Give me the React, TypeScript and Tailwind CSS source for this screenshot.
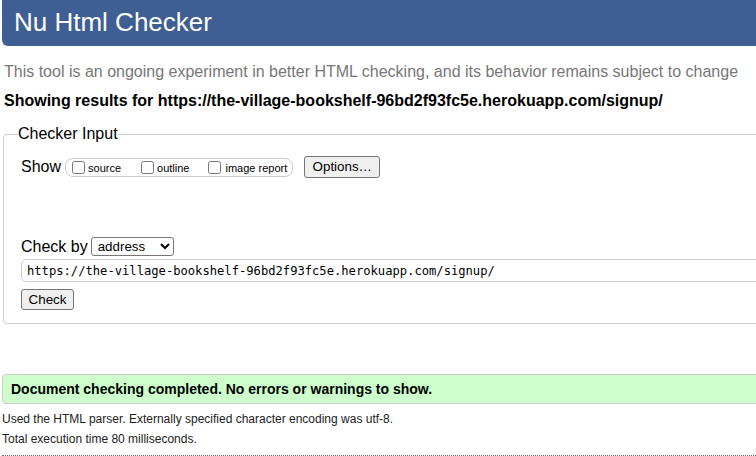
import React from "react";

const sans = { fontFamily: '"Liberation Sans", Arial, sans-serif' };

const url = "https://the-village-bookshelf-96bd2f93fc5e.herokuapp.com/signup/";

export default function App() {
  return (
    <div
      className="w-[756px] h-[456px] overflow-hidden bg-white text-black font-['Liberation_Sans',Arial,sans-serif]"
      style={sans}
    >
      <div className="w-[820px]">
        <header className="ml-[2px] h-[46px] bg-[#3e5e94] rounded-b-[6px] pl-[12px] flex items-center">
          <h1 className="text-[26px] leading-none text-white pb-[2px]">Nu Html Checker</h1>
        </header>

        <p className="mt-[16px] ml-[4px] text-[16px] leading-[20px] text-[#777] whitespace-nowrap">
          This tool is an ongoing experiment in better HTML checking, and its behavior remains subject to change
        </p>
        <p className="mt-[9px] ml-[4px] text-[16px] leading-[20px] font-bold whitespace-nowrap">
          Showing results for {url}
        </p>

        <fieldset className="mt-[13px] ml-[3px] border border-[#ccc] rounded-[4px] pl-[14px] pb-[13px]">
          <legend className="text-[16px] leading-[20px]">Checker Input</legend>
          <div className="pl-[3px]">
            <div className="mt-[12px] flex items-center h-[22px]">
              <span className="text-[16px] mr-[4px]">Show</span>
              <div className="flex items-center h-[19px] border border-[#ccc] rounded-[8px] pl-[6px] pr-[5px] text-[11px]">
                <label className="flex items-center">
                  <input type="checkbox" className="w-[13px] h-[13px] m-0 mr-[3px]" />
                  <span className="mt-[3px]">source</span>
                </label>
                <label className="flex items-center ml-[20px]">
                  <input type="checkbox" className="w-[13px] h-[13px] m-0 mr-[3px]" />
                  <span className="mt-[3px]">outline</span>
                </label>
                <label className="flex items-center ml-[19px]">
                  <input type="checkbox" className="w-[13px] h-[13px] m-0 mr-[4px]" />
                  <span className="mt-[3px]">image report</span>
                </label>
              </div>
              <button className="ml-[11px] w-[76px] h-[22px] bg-[#efefef] border border-[#767676] rounded-[3px] text-[13.33px]">
                Options…
              </button>
            </div>

            <div className="mt-[59px] flex items-center h-[19px]">
              <span className="text-[16px] leading-[19px] mr-[3px]">Check by</span>
              <select
                defaultValue="address"
                className="w-[83px] h-[19px] border border-[#767676] rounded-[3px] bg-white text-[13.33px] leading-[15px] pl-[2px] py-0"
              >
                <option value="address">address</option>
                <option value="upload">file upload</option>
                <option value="textarea">text input</option>
              </select>
            </div>

            <input
              readOnly
              value={url}
              className="mt-[3px] block w-[790px] h-[23px] border border-[#ccc] rounded-l-[5px] pl-[5px] text-[12.15px]"
              style={{ fontFamily: '"DejaVu Sans Mono", "Liberation Mono", monospace' }}
            />

            <button className="mt-[7px] block w-[53px] h-[21px] bg-[#efefef] border border-[#767676] rounded-[3px] text-[13.33px] leading-[19px]">
              Check
            </button>
          </div>
        </fieldset>

        <div className="mt-[50px] ml-[2px] h-[30px] bg-[#ccffcc] border border-[#ccc] rounded-l-[4px] pl-[8px] flex items-center">
          <p className="text-[14px] font-bold whitespace-nowrap">
            Document checking completed. No errors or warnings to show.
          </p>
        </div>

        <p className="mt-[5px] ml-[2px] text-[12px] leading-[20px] text-[#222]">
          Used the HTML parser. Externally specified character encoding was utf-8.
        </p>
        <p className="ml-[2px] text-[12px] leading-[20px] text-[#222]">
          Total execution time 80 milliseconds.
        </p>
        <div className="mt-[6px] ml-[2px] border-t border-dotted border-[#666]" />
      </div>
    </div>
  );
}
